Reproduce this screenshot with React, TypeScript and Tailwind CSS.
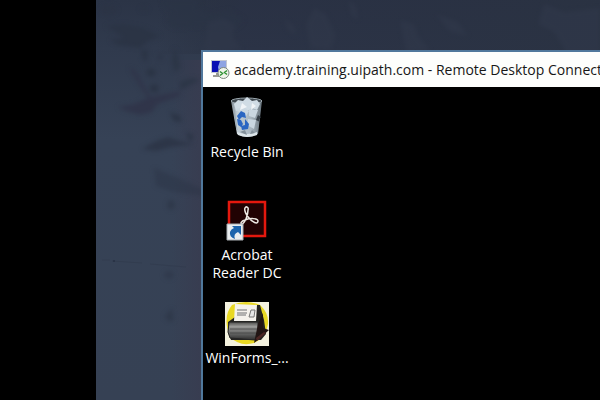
import type { ReactNode } from 'react'

function Wallpaper() {
  return (
    <svg className="absolute inset-0 h-full w-full" viewBox="0 0 504 400" preserveAspectRatio="xMinYMin slice" aria-hidden="true">
      <defs>
        <linearGradient id="sky" x1="0" y1="0" x2="0" y2="1">
          <stop offset="0" stopColor="#2b3446" />
          <stop offset="0.12" stopColor="#303a4d" />
          <stop offset="0.35" stopColor="#364256" />
          <stop offset="1" stopColor="#364154" />
        </linearGradient>
        <linearGradient id="shade" x1="0" y1="0" x2="1" y2="0">
          <stop offset="0" stopColor="#262d3b" stopOpacity="0" />
          <stop offset="0.2" stopColor="#293043" stopOpacity="0.7" />
          <stop offset="1" stopColor="#2a3242" stopOpacity="0.95" />
        </linearGradient>
        <linearGradient id="edge" x1="0" y1="0" x2="1" y2="0">
          <stop offset="0" stopColor="#383c50" stopOpacity="0" />
          <stop offset="1" stopColor="#383c50" />
        </linearGradient>
        <filter id="soft" x="-20%" y="-20%" width="140%" height="140%" colorInterpolationFilters="sRGB">
          <feGaussianBlur stdDeviation="2" />
        </filter>
      </defs>
      <rect width="504" height="400" fill="url(#sky)" />
      <rect x="60" width="444" height="54" fill="url(#shade)" />
      <rect x="76" y="60" width="32" height="340" fill="url(#edge)" />
      <g filter="url(#soft)" fill="#2b3445">
        <path d="M10 26l18-2 20 4 16 8-12 5-8 7-22-3-8-5 14-2-8-6z" />
        <path d="M66 0h40l-6 8 14 6 20-4 14 10-8 8-28-2-34 2-8-8 8-6-10-6z" opacity=".75" />
        <path d="M33 68l6 2 8 14 8 13 30-6-2 5-22 8-5 8-12 3-14-4-8-4 16-3 14-6-10-15z" fill="#30354a" />
        <path d="M78 48l4 8 2 12-6 4-2-12z" opacity=".8" />
        <path d="M84 82l12-4 8 2-12 6-8 4z" opacity=".8" />
        <path d="M46 149l14-8 12-4 12 4 14 3-22 3-16 4z" opacity=".85" />
        <path d="M58 168l12 5 12 5 26 12v6l-30-4-18-6z" opacity=".45" />
        <path d="M46 49l6 2-2 12-4-6zM62 54l5 2-3 5zM52 68l8 2-2 7-8-2zM56 84l7 2-2 7-8-3zM74 112l10 4 2 6-8-1zM90 132l8 4-4 6z" />
        <ellipse cx="75" cy="205" rx="4" ry="5" opacity=".6" />
        <ellipse cx="73" cy="275" rx="5" ry="4" opacity=".5" />
        <path d="M76 308l2 12-4 2-6-5z" opacity=".6" />
        <ellipse cx="13" cy="10" rx="8" ry="5" opacity=".6" />
        <ellipse cx="48" cy="9" rx="4" ry="2" opacity=".6" />
      </g>
      <g filter="url(#soft)" fill="#30384a" opacity=".65">
        <path d="M112 22l16-4 12 8-4 10 10 14-38 2zM188 18l10 8 2 10-8-6zM218 8l12 6 10 22-6 14-20-2-4-24zM252 0l8 6 2 14-6-4z" />
        <path d="M304 20l14 4 4 12 12 14-24 2zM340 14l22 8 10 14-18-4zM448 4l20 8 36-4v44h-34l-12-20-16-8z" />
      </g>
      <path d="M6 260h8M16 261l30 2M54 264l36 3" stroke="#303a4c" opacity=".6" />
      <circle cx="18" cy="261" r="1" fill="#273143" />
    </svg>
  )
}

function RemoteIcon() {
  return (
    <svg className="h-5 w-5 shrink-0" viewBox="0 0 20 20" aria-hidden="true">
      <path d="M1 0h16v13H1z" fill="#c3c7d2" />
      <path d="M2 1h14v11H2z" fill="#8ea4e3" />
      <path d="M2 1h8l-2 6 1 5H2z" fill="#0a10b4" />
      <path d="M6 13h6v2H6zM3 15h10v2H3z" fill="#9b9c94" />
      <circle cx="13.500" cy="13" r="5.500" fill="#eff5ea" stroke="#7f8980" />
      <path d="M10 11.500l2.500 2-2.500 2M17 10.500l-2.500 2 2.500 2" fill="none" stroke="#2f9133" strokeWidth="1.500" />
    </svg>
  )
}

function BinIcon() {
  return (
    <svg className="h-11 w-11" viewBox="0 0 44 44" aria-hidden="true">
      <defs>
        <linearGradient id="glass" x1="0" y1="0" x2="1" y2="0">
          <stop offset="0" stopColor="#7c8790" />
          <stop offset="0.2" stopColor="#c2ced6" />
          <stop offset="0.65" stopColor="#a9b6c0" />
          <stop offset="1" stopColor="#66727b" />
        </linearGradient>
        <filter id="frost" x="-5%" y="-5%" width="110%" height="110%" colorInterpolationFilters="sRGB">
          <feGaussianBlur stdDeviation="0.7" />
        </filter>
      </defs>
      <g filter="url(#frost)">
        <path d="M6 5q15-4 31 0l-4 33q-11 6-21 0z" fill="url(#glass)" />
        <ellipse cx="21.500" cy="5" rx="15.500" ry="3" fill="#3f484f" stroke="#9aa6ad" />
        <path d="M9 8l4-4 5 1 4-4 5 4 5-1 3 4-3 6-5-2-5 3-6-2-5 2z" fill="#d0dce5" />
        <path d="M11 13l8-2 5 4-4 7zM24 13l9 1-3 8-6-2zM23 23l8 1-2 9-7-4z" fill="#cad7e1" />
        <path d="M17 7l5 4-7 3zM27 7l4 3-5 4z" fill="#f0f4f7" />
        <path d="M9 13l3 21" fill="none" stroke="#9daab4" />
        <path d="M33 19l3 2-2 3 1 2-4-2z" fill="#353e46" />
        <path d="M12 20l4-5 4 2 1 5-4-1-3 3zM12 23l4 1 2 4-2 3-3-2zM20 23l4 5-1 5-6 1-1-4 4-1z" fill="#2b66c2" />
        <path d="M12 36q10 4 20 0v3q-10 4-19 0z" fill="#dce5e9" />
        <path d="M15 36l5-2 2 5zM25 38l2-4 3 3z" fill="#83909a" />
      </g>
    </svg>
  )
}

function AcrobatIcon() {
  return (
    <svg className="h-11 w-11" viewBox="0 0 44 44" aria-hidden="true">
      <path d="M4 3h36v34H4z" fill="#210203" stroke="#e4180e" strokeWidth="2.500" />
      <path d="M20 9c1-2 4-1 3 2 0 5-3 13-6 14-2 0-1-3 3-4 5-2 13-2 13 1 0 4-6 1-9-3-3-3-5-8-4-10z" fill="none" stroke="#eee9e4" strokeWidth="1.500" strokeLinejoin="round" />
      <path d="M2 25h16v16H2z" fill="#e9edef" stroke="#a9afb4" />
      <path d="M7 27h9v9l-3-3q-5 2-3 7-6-2-5-7 1-3 4-4z" fill="#1d64ac" />
    </svg>
  )
}

function PrinterIcon() {
  return (
    <svg className="h-11 w-11" viewBox="0 0 44 44" aria-hidden="true">
      <defs>
        <linearGradient id="drum" x1="0" y1="0" x2="0" y2="1">
          <stop offset="0" stopColor="#4d4d4b" />
          <stop offset="0.25" stopColor="#9a9a98" />
          <stop offset="0.6" stopColor="#6b6c6b" />
          <stop offset="1" stopColor="#2c2c2c" />
        </linearGradient>
      </defs>
      <path d="M0 0h44v44H0z" fill="#f4f2df" />
      <path d="M7 3q14-6 28 0 9 8 8 19-2 14-14 19-14 4-24-6Q-3 15 7 3z" fill="#e8d823" />
      <path d="M10 3h25l4 15 2 14-5 6H6l-3-8V20l7-5z" fill="#252421" />
      <path d="M10 2l22 1-1 16H9z" fill="#f4f2ec" />
      <path d="M12 8h10M12 11h10M12 13h9" stroke="#9b9c9a" strokeWidth="1.500" />
      <path d="M26 8h4l-1 7h-5z" fill="#e7e8e7" stroke="#777775" />
      <path d="M4 20h29v14l-3 4-25-2-2-6z" fill="url(#drum)" stroke="#252525" />
      <path d="M5 27h27M5 31h26" stroke="#3c3d3c" opacity=".7" />
      <path d="M33 22l5-11v15l6 2-11 10-4 3z" fill="#211514" />
      <path d="M31 36l8-6 2 1-9 8z" fill="#4c2624" />
    </svg>
  )
}

function Shortcut({ icon, label }: { icon: ReactNode; label: string }) {
  return (
    <button type="button" className="flex w-full flex-col items-center text-center text-sm leading-[18px] text-white">
      {icon}
      <span className="mt-[3px] w-full">{label}</span>
    </button>
  )
}

export default function App() {
  return (
    <main className="flex h-screen overflow-hidden bg-black font-['Open_Sans','Noto_Sans',sans-serif]">
      <div className="w-24 shrink-0" />
      <div className="relative flex min-w-0 flex-1 overflow-hidden pt-[50px] pl-[105px]">
        <Wallpaper />
        <section className="relative flex min-w-0 flex-1 flex-col border-t-2 border-l-2 border-[#50789c] bg-black">
          <header className="flex h-[35px] shrink-0 items-center gap-1 overflow-hidden bg-[#fdfefc] pl-[7px] text-sm text-[#171717]">
            <RemoteIcon />
            <h1 className="whitespace-nowrap">academy.training.uipath.com - Remote Desktop Connect</h1>
          </header>
          <div className="flex w-[88px] flex-col pt-[9px]">
            <div className="h-[103px]"><Shortcut icon={<BinIcon />} label="Recycle Bin" /></div>
            <div className="h-[103px]"><Shortcut icon={<AcrobatIcon />} label="Acrobat Reader DC" /></div>
            <Shortcut icon={<PrinterIcon />} label="WinForms_..." />
          </div>
        </section>
      </div>
    </main>
  )
}
